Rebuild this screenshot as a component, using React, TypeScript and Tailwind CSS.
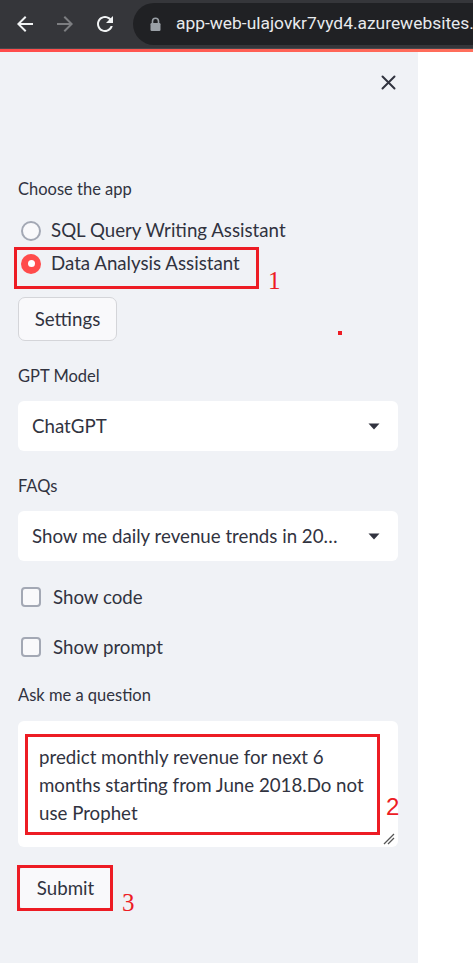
import React from "react";

const RED = "#ed1c24";

function Caret() {
  return (
    <svg width="12" height="7" viewBox="0 0 12 7" className="shrink-0">
      <path d="M0.5 0.5 H11.5 L6 6.5 Z" fill="#31333f" />
    </svg>
  );
}

export default function App() {
  return (
    <div className="w-[473px] h-[963px] overflow-hidden flex flex-col bg-white font-['Lato',sans-serif] text-[#31333f]">
      {/* Browser toolbar */}
      <div className="h-[48px] shrink-0 bg-[#35363a] flex items-center">
        <svg width="24" height="24" viewBox="0 0 24 24" className="ml-[13px] shrink-0">
          <path fill="#f1f3f4" d="M20 11H7.83l5.59-5.59L12 4l-8 8 8 8 1.41-1.41L7.83 13H20v-2z" />
        </svg>
        <svg width="24" height="24" viewBox="0 0 24 24" className="ml-[16px] shrink-0">
          <path fill="#7d7e81" d="M4 11h12.17l-5.59-5.59L12 4l8 8-8 8-1.41-1.41L16.17 13H4v-2z" />
        </svg>
        <svg width="24" height="24" viewBox="0 0 24 24" className="ml-[16px] shrink-0">
          <path fill="#f1f3f4" d="M17.65 6.35C16.2 4.9 14.21 4 12 4c-4.42 0-7.99 3.58-7.99 8s3.57 8 7.99 8c3.73 0 6.84-2.55 7.73-6h-2.08c-.82 2.33-3.04 4-5.65 4-3.31 0-6-2.69-6-6s2.69-6 6-6c1.66 0 3.14.69 4.22 1.78L13 11h7V4l-2.35 2.35z" />
        </svg>
        <div className="ml-[16px] h-[42px] flex-1 min-w-0 bg-[#202124] rounded-l-full flex items-center overflow-hidden">
          <svg width="11" height="14" viewBox="0 0 11 14" className="ml-[17px] shrink-0">
            <path d="M2.5 6 V4.2 A3 3 0 0 1 8.5 4.2 V6" fill="none" stroke="#9aa0a6" strokeWidth="1.6" />
            <rect x="0.5" y="6" width="10" height="8" rx="1.2" fill="#9aa0a6" />
          </svg>
          <span className="ml-[15px] whitespace-nowrap text-[17.4px] leading-none text-[#e8eaed] font-['Roboto',sans-serif]">
            app-web-ulajovkr7vyd4.azurewebsites.
          </span>
        </div>
      </div>
      <div className="h-[1px] shrink-0 bg-[#47484c]" />
      <div className="h-[3px] shrink-0 bg-gradient-to-r from-[#ff4b4b] to-[#ff6f5c]" />

      {/* Body */}
      <div className="flex flex-1 min-h-0">
        <div className="relative w-[418px] shrink-0 bg-[#f0f2f6] pl-[18px] pr-[20px] flex flex-col">
          {/* close */}
          <div className="flex justify-end pr-[2px] mt-[23px]">
            <svg width="15" height="15" viewBox="0 0 15 15">
              <path d="M1.5 1.5 L13.5 13.5 M13.5 1.5 L1.5 13.5" stroke="#31333f" strokeWidth="2" strokeLinecap="round" />
            </svg>
          </div>

          <div className="mt-[87px] h-[24px] flex items-center text-[16.5px]">Choose the app</div>

          <div className="mt-[13px] flex flex-col">
            <div className="h-[33px] flex items-center">
              <div className="ml-[3px] w-[20px] h-[20px] rounded-full border-[2.5px] border-[#a3a8b4] bg-[#f9f9fb] shrink-0" />
              <span className="ml-[10px] text-[18.7px]">SQL Query Writing Assistant</span>
            </div>
            <div className="h-[33px] flex items-center">
              <div className="ml-[3px] w-[20px] h-[20px] rounded-full bg-[#ff4b4b] flex items-center justify-center shrink-0">
                <div className="w-[7px] h-[7px] rounded-full bg-white" />
              </div>
              <span className="ml-[10px] text-[18.7px]">Data Analysis Assistant</span>
            </div>
          </div>

          <div className="mt-[17px] self-start h-[44px] w-[99px] rounded-[7px] border border-[#d4d5d9] bg-[#f9f9fb] flex items-center justify-center text-[18.7px]">
            Settings
          </div>

          <div className="mt-[23px] h-[24px] flex items-center text-[16.5px]">GPT Model</div>
          <div className="mt-[13px] h-[50px] rounded-[6px] bg-white flex items-center justify-between pl-[14px] pr-[18px]">
            <span className="text-[18.7px]">ChatGPT</span>
            <Caret />
          </div>

          <div className="mt-[23px] h-[24px] flex items-center text-[16.5px]">FAQs</div>
          <div className="mt-[13px] h-[50px] rounded-[6px] bg-white flex items-center justify-between pl-[14px] pr-[18px]">
            <span className="text-[18.7px] whitespace-nowrap">Show me daily revenue trends in 20…</span>
            <Caret />
          </div>

          <div className="mt-[24px] h-[24px] flex items-center">
            <div className="ml-[3px] w-[20px] h-[20px] rounded-[4px] border-[2px] border-[#a3a8b4] bg-[#f9f9fb] shrink-0" />
            <span className="ml-[12px] text-[18.7px]">Show code</span>
          </div>
          <div className="mt-[26px] h-[24px] flex items-center">
            <div className="ml-[3px] w-[20px] h-[20px] rounded-[4px] border-[2px] border-[#a3a8b4] bg-[#f9f9fb] shrink-0" />
            <span className="ml-[12px] text-[18.7px]">Show prompt</span>
          </div>

          <div className="mt-[24px] h-[24px] flex items-center text-[16.5px]">Ask me a question</div>
          <div className="relative mt-[14px] h-[126px] rounded-[6px] bg-white pl-[21px] pt-[22px] text-[18.7px] leading-[28px]">
            <div>predict monthly revenue for next 6</div>
            <div>months starting from June 2018.Do not</div>
            <div>use Prophet</div>
            <svg width="12" height="12" viewBox="0 0 12 12" className="absolute right-[3px] bottom-[2px]">
              <path d="M1 11 L11 1 M5 11 L11 5" stroke="#555" strokeWidth="1.3" />
            </svg>
          </div>

          <div className="mt-[19px] self-start h-[44px] w-[95px] rounded-[7px] border border-[#d4d5d9] bg-[#f9f9fb] flex items-center justify-center text-[18.7px]">
            Submit
          </div>

          {/* annotations */}
          <div className="absolute left-[14px] top-[195px] w-[245px] h-[42px] border-[3px] border-[#ed1c24]" />
          <div className="absolute left-[268px] top-[216px] text-[25px] leading-none font-['Liberation_Serif',serif]" style={{ color: RED }}>1</div>
          <div className="absolute left-[338px] top-[279px] w-[4px] h-[4px] bg-[#ed1c24]" />
          <div className="absolute left-[25px] top-[682px] w-[355px] h-[101px] border-[3px] border-[#ed1c24]" />
          <div className="absolute left-[386px] top-[743px] text-[24px] leading-none font-['Liberation_Sans',sans-serif]" style={{ color: RED }}>2</div>
          <div className="absolute left-[17px] top-[813px] w-[96px] h-[46px] border-[3px] border-[#ed1c24]" />
          <div className="absolute left-[122px] top-[838px] text-[25px] leading-none font-['Liberation_Serif',serif]" style={{ color: RED }}>3</div>
        </div>
        <div className="flex-1 bg-white" />
      </div>
    </div>
  );
}
